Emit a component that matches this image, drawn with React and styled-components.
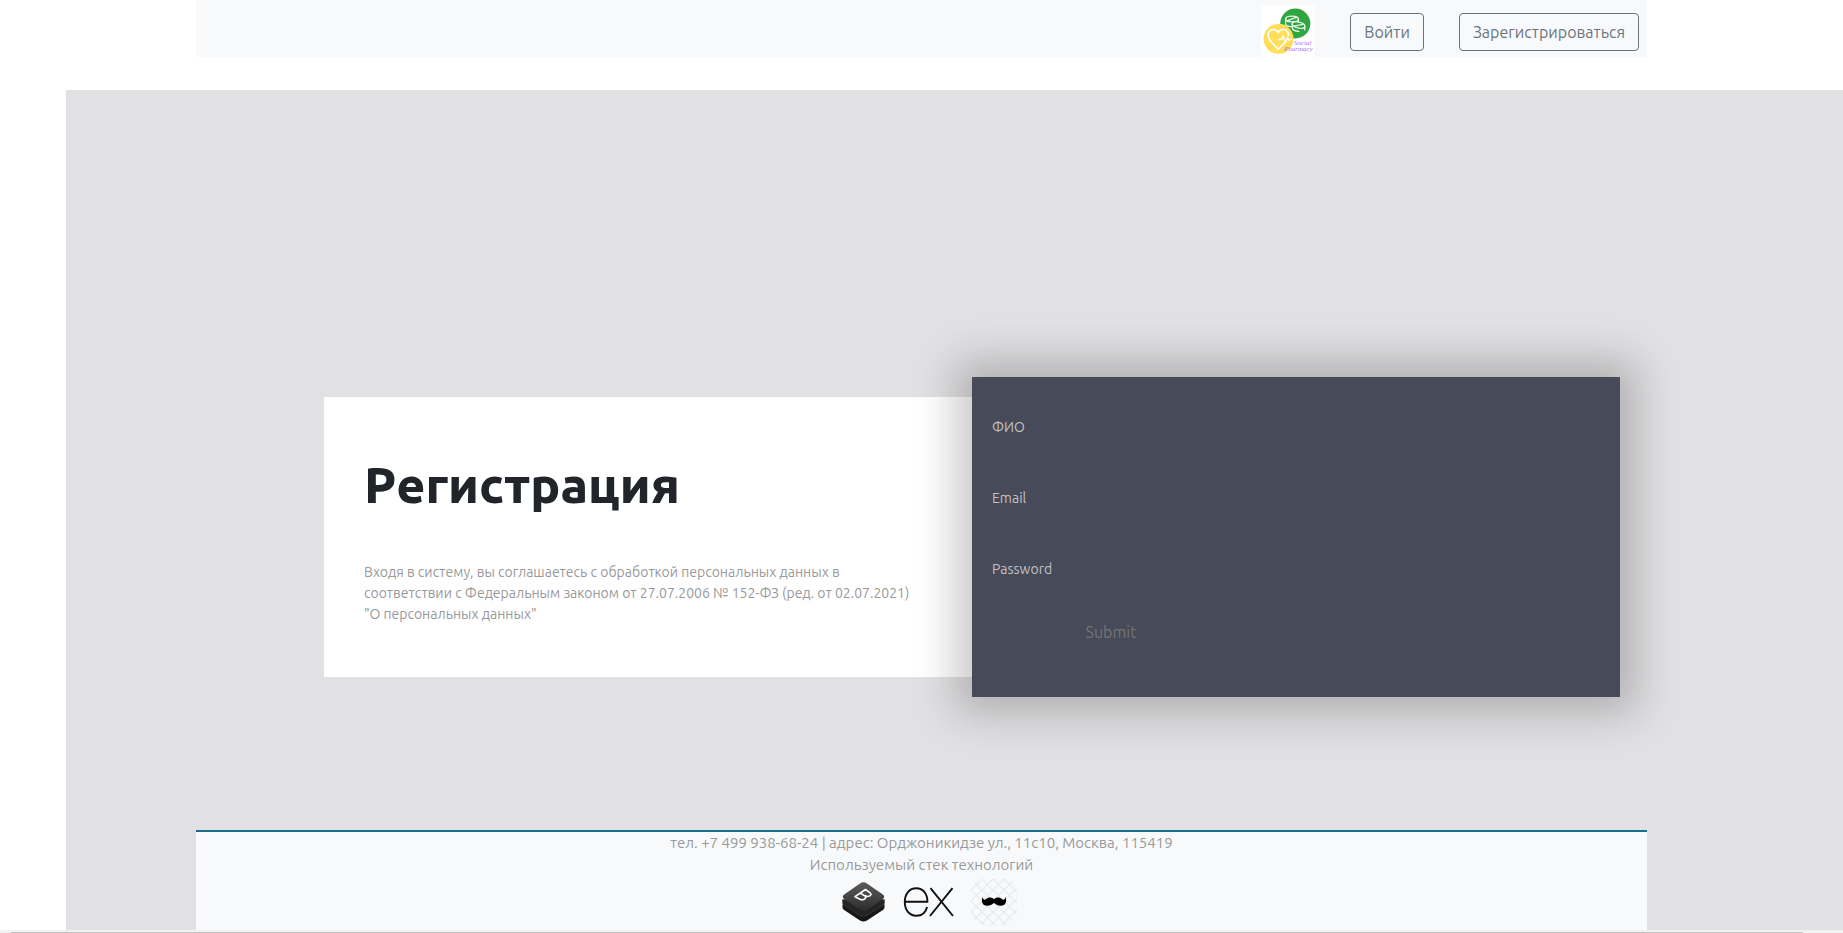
import React from "react";
import styled, { createGlobalStyle } from "styled-components";

const GlobalStyle = createGlobalStyle`
  *, *::before, *::after { box-sizing: border-box; }
  body {
    margin: 0;
    background: #fff;
    color: #212529;
    font-family: Ubuntu, "Noto Sans", "Open Sans", sans-serif;
    font-size: 16px;
    line-height: 24px;
  }
`;

const Page = styled.div`
  display: flex;
  flex-direction: column;
  min-height: 100vh;
`;

const Navbar = styled.header`
  display: flex;
  justify-content: flex-end;
  align-items: flex-start;
  gap: 35px;
  height: 57px;
  margin: 0 196px 33px;
  padding: 5px 8px 0;
  background: #f8f9fb;
`;

const LogoLink = styled.a`
  display: block;
  height: 52px;
  overflow: hidden;
`;

const NavButton = styled.button`
  margin: 8px 0 0;
  height: 38px;
  padding: 0 13px;
  border: 1px solid #6c757d;
  border-radius: 4px;
  background: transparent;
  color: #6c757d;
  font: inherit;
  font-size: 16px;
  cursor: pointer;
`;

const Backdrop = styled.div`
  flex: 1;
  display: flex;
  flex-direction: column;
  margin-left: 66px;
  background: #e1e1e3;
`;

const Stage = styled.main`
  flex: 1;
  display: grid;
  grid-template-columns: 1fr 1fr;
  align-items: center;
  padding: 154px 223px 0 258px;
`;

const Intro = styled.section`
  min-height: 280px;
  padding: 50px 52px 0 40px;
  background: #fff;
`;

const Title = styled.h1`
  margin: 0 0 40px;
  font-size: 50px;
  line-height: 75px;
  font-weight: 900;
`;

const Notice = styled.p`
  margin: 0;
  color: #999;
  font-size: 14px;
  line-height: 21px;
`;

const Form = styled.form`
  min-height: 320px;
  padding: 40px 20px 0;
  background: #474a59;
  box-shadow: 0 0 40px 16px rgba(0, 0, 0, 0.22);
`;

const Field = styled.div`
  display: flex;
  flex-direction: column;
  height: 71px;

  &:last-of-type {
    height: 54px;
  }
`;

const Label = styled.label`
  color: #c2c2c5;
  font-size: 14px;
  line-height: 21px;
`;

const Input = styled.input`
  height: 30px;
  padding: 0;
  border: 0;
  outline: 0;
  background: transparent;
  color: #fff;
  font: inherit;
`;

const Submit = styled.button`
  display: block;
  width: 238px;
  height: 38px;
  padding: 0;
  border: 0;
  background: transparent;
  color: #737376;
  font: inherit;
  cursor: pointer;
`;

const Footer = styled.footer`
  margin: 0 196px 0 130px;
  border-top: 2px solid #17708a;
  background: #f8f9fb;
  color: #999;
  font-size: 15px;
  line-height: 22px;
  text-align: center;
`;

const FooterLine = styled.p`
  margin: 0;
`;

const Stack = styled.div`
  display: flex;
  justify-content: center;
  align-items: center;
  gap: 16px;
  height: 54px;
  padding: 0 0 2px 15px;
`;

const ScrollTrack = styled.div`
  height: 3px;
  padding: 2px 40px 0 11px;
  background: #f1f1f1;
`;

const ScrollThumb = styled.div`
  height: 1px;
  background: #c1c1c1;
`;

const Logo = () => (
  <svg width="54" height="54" viewBox="0 0 54 54" role="img" aria-label="Social Pharmacy">
    <rect width="54" height="54" fill="#fff" />
    <circle cx="34.3" cy="18.5" r="15" fill="#2fa640" />
    <g fill="none" stroke="#e9f7ea" strokeWidth="1.3" strokeLinecap="round" strokeLinejoin="round">
      <ellipse cx="31" cy="14" rx="6.4" ry="2.9" />
      <path d="M24.6 14v4.800c0 1.600 2.600 2.800 6 2.900M37.400 14v2.400M26.500 15.600l9-3.200" />
      <ellipse cx="37.5" cy="20" rx="6.4" ry="2.9" transform="rotate(14 37.5 20)" />
      <path d="M31.300 19v4c.4 1.800 3.400 3.200 6.600 3.400M43.800 21.500v3.400M33 21.200l9-1.800" />
    </g>
    <circle cx="17.5" cy="33.8" r="15" fill="#ffde59" />
    <g fill="none" stroke="#fff" strokeWidth="1.6" strokeLinecap="round" strokeLinejoin="round">
      <path d="M27.500 30.500c.2-3.700-2.200-6-5.200-6-2.300 0-4 1.300-5 3.200-1-1.900-2.700-3.200-5-3.200-3.400 0-6 3.200-5 7.200 1 4.600 5.600 8 10 12.400 2.400-2.400 4.400-4.200 6.200-6" />
      <path d="M17.500 34.500h3l1.600-3.500 2.400 6.500 2-5 1.400 3 1.200-1h1.500" strokeWidth="1.3" />
    </g>
    <g fill="#a678f0" fontFamily="'Liberation Serif', serif" fontStyle="italic" fontSize="7">
      <text x="33" y="40">Social</text>
      <text x="23" y="45.5">Pharmacy</text>
    </g>
  </svg>
);

const BootstrapIcon = () => (
  <svg width="45" height="42" viewBox="0 0 45 42" role="img" aria-label="Bootstrap">
    <defs>
      <linearGradient id="top-layer" x1="0" y1="0" x2="0" y2="1">
        <stop offset="0" stopColor="#5c5c5c" />
        <stop offset="1" stopColor="#2b2b2b" />
      </linearGradient>
    </defs>
    <path d="M1.500 24q0-1.500 2-1.500h38q2 0 2 1.500v2.500q0 1.500-2 2.700L26 39.500q-3.500 2.200-7 0L3.500 29.200q-2-1.200-2-2.700z" fill="#171717" />
    <path d="M1.500 18.500h42v3.500q0 1.500-2 2.700L26 34.500q-3.500 2.200-7 0L3.500 24.700q-2-1.200-2-2.700z" fill="#242424" stroke="#454545" strokeWidth=".5" />
    <path d="M3.500 13.300L19 2.500q3.500-2.300 7 0l15.500 10.800q3.500 2.500 0 5L26 29q-3.500 2.300-7 0L3.500 18.300q-3.500-2.500 0-5z" fill="url(#top-layer)" />
    <path d="M14 15.700L24.500 8.500l4.300 3.100q2.300 1.700 0 3.300-2 1.300-4.600-.2 1.500 1.700-.7 3.300-2.500 1.600-5 0zM19.300 12l5 3.300" fill="none" stroke="#fff" strokeWidth="1.600" strokeLinejoin="round" />
  </svg>
);

const ExpressIcon = () => (
  <svg width="53" height="32" viewBox="0 0 53 32" role="img" aria-label="Express">
    <g fill="none" stroke="#111" strokeWidth="1.900">
      <path d="M2.800 15.800h22.600C25.400 7.500 21 2.200 14.300 2.200 7.300 2.200 2.800 7.800 2.800 16s4.500 13.800 11.500 13.800c5.600 0 9.500-3.400 10.800-8.800" />
      <path d="M28.500 2.200L51 30M50.500 2.200L28 30" />
    </g>
  </svg>
);

const MustacheIcon = () => (
  <svg width="46" height="46" viewBox="0 0 46 46" role="img" aria-label="Mustache">
    <defs>
      <pattern id="lattice" width="11" height="11" patternUnits="userSpaceOnUse">
        <path d="M0 0l11 11M11 0L0 11" stroke="#e8e9eb" strokeWidth="1.2" />
      </pattern>
    </defs>
    <rect width="46" height="46" rx="14" fill="url(#lattice)" />
    <path d="M23 20.200c2-2.300 5.400-2.400 7.500-.4 1.700 1.500 3.300 1.400 4-1.800 1.500 4.700.2 8.600-4.500 8.800-2.900.1-5-1.200-7-2.800-2 1.600-4.100 2.900-7 2.800-4.700-.2-6-4.100-4.500-8.800.7 3.200 2.300 3.300 4 1.800 2.100-2 5.500-1.900 7.500.4z" fill="#000" />
  </svg>
);

const fields = [
  { id: "name", label: "ФИО", type: "text" },
  { id: "email", label: "Email", type: "email" },
  { id: "password", label: "Password", type: "password" },
];

export default function App() {
  return (
    <>
      <GlobalStyle />
      <Page>
        <Navbar>
          <LogoLink href="/"><Logo /></LogoLink>
          <NavButton type="button">Войти</NavButton>
          <NavButton type="button">Зарегистрироваться</NavButton>
        </Navbar>
        <Backdrop>
          <Stage>
            <Intro>
              <Title>Регистрация</Title>
              <Notice>
                Входя в систему, вы соглашаетесь с обработкой персональных данных в
                соответствии с Федеральным законом от 27.07.2006 № 152-ФЗ (ред. от 02.07.2021)
                "О персональных данных"
              </Notice>
            </Intro>
            <Form onSubmit={(event) => event.preventDefault()}>
              {fields.map((field) => (
                <Field key={field.id}>
                  <Label htmlFor={field.id}>{field.label}</Label>
                  <Input id={field.id} name={field.id} type={field.type} />
                </Field>
              ))}
              <Submit type="submit">Submit</Submit>
            </Form>
          </Stage>
          <Footer>
            <FooterLine>тел. +7 499 938-68-24 | адрес: Орджоникидзе ул., 11с10, Москва, 115419</FooterLine>
            <FooterLine>Используемый стек технологий</FooterLine>
            <Stack>
              <BootstrapIcon />
              <ExpressIcon />
              <MustacheIcon />
            </Stack>
          </Footer>
        </Backdrop>
        <ScrollTrack>
          <ScrollThumb />
        </ScrollTrack>
      </Page>
    </>
  );
}
